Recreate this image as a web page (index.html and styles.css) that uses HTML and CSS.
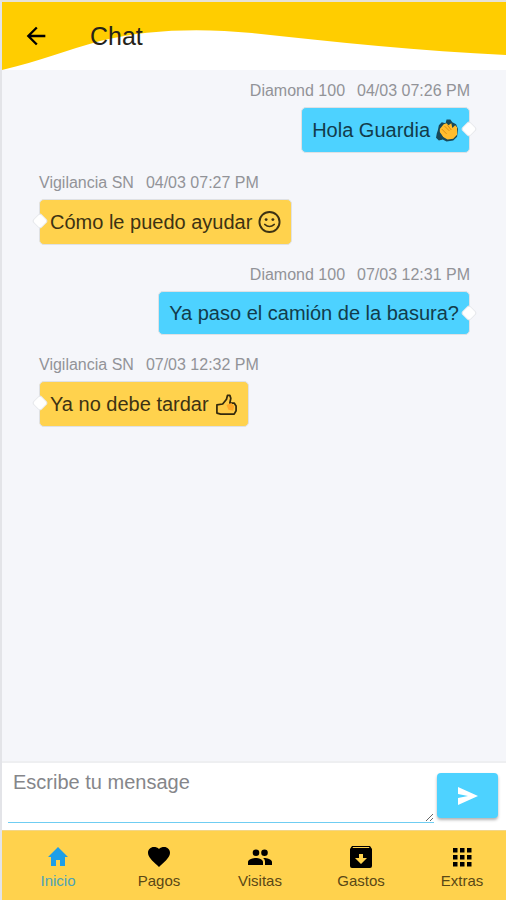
FILE: index.html
```html
<!DOCTYPE html>
<html lang="es">
<head>
<meta charset="utf-8">
<meta name="viewport" content="width=device-width, initial-scale=1">
<title>Chat</title>
<link rel="stylesheet" href="styles.css">
</head>
<body>
<div class="app">
  <header class="header">
    <svg class="wave" viewBox="0 0 504 68" preserveAspectRatio="none" aria-hidden="true">
      <path d="M0 0H504V53C420 49 330 40 250 31C200 26 145 27 98 39C65 48 38 59 0 68Z" fill="#ffcd00"/>
    </svg>
    <button class="back" type="button" aria-label="Volver">
      <svg viewBox="0 0 24 24" width="28" height="28"><path d="M20 11H7.8l5.6-5.6L12 4l-8 8 8 8 1.400-1.400L7.800 13H20z"/></svg>
    </button>
    <h1 class="title">Chat</h1>
  </header>

  <main class="messages">
    <article class="message sent">
      <div class="meta"><span>Diamond 100</span><time>04/03 07:26 PM</time></div>
      <div class="bubble">Hola Guardia
        <svg class="emoji" viewBox="0 0 24 24" role="img" aria-label="aplausos">
          <path d="M3 7l3-3 4 1 1-4 4 0 2 3 4 2 2 5-1 8-4 4-7 1-4-2-4 1-3-3 1-5 1-3z" fill="#17495a"/>
          <path d="M4 11L8 6l3-1 2 2 3-2 1 5 3-3 2 2 0 8-4 4-6 1-5-3-3-5z" fill="#ffbd2e"/>
          <path d="M6 11l5 5M9 8l5 5M12 7l4 5" fill="none" stroke="#d68a13" stroke-width="1"/>
          <path d="M1 15l4 1 3 4-2 2-4-1-1-3z" fill="#17495a"/>
        </svg>
      </div>
    </article>
    <article class="message received">
      <div class="meta"><span>Vigilancia SN</span><time>04/03 07:27 PM</time></div>
      <div class="bubble">Cómo le puedo ayudar
        <svg class="emoji" viewBox="0 0 24 24" role="img" aria-label="sonrisa">
          <circle cx="12" cy="12" r="10.500" fill="#ffd34f" stroke="#3d3213" stroke-width="2"/>
          <circle cx="8.500" cy="9.500" r="1.500" fill="#3d3213"/>
          <circle cx="15.500" cy="9.500" r="1.500" fill="#3d3213"/>
          <path d="M7 14.500q5 4.500 10 0" fill="none" stroke="#3d3213" stroke-width="1.600" stroke-linecap="round"/>
        </svg>
      </div>
    </article>
    <article class="message sent">
      <div class="meta"><span>Diamond 100</span><time>07/03 12:31 PM</time></div>
      <div class="bubble">Ya paso el camión de la basura?</div>
    </article>
    <article class="message received">
      <div class="meta"><span>Vigilancia SN</span><time>07/03 12:32 PM</time></div>
      <div class="bubble">Ya no debe tardar
        <svg class="emoji" viewBox="0 0 24 24" role="img" aria-label="pulgar arriba">
          <path d="M2 13l6-1 4-5 1-4h2.500l1 3-1 5H20l2 3v5l-2 3.500H6l-4-1z" fill="#ffcb45" stroke="#33290d" stroke-width="1.800" stroke-linejoin="round"/>
          <path d="M12 13l5-2 3 3-1 5-5-1z" fill="#ffa726"/>
        </svg>
      </div>
    </article>
  </main>

  <form class="composer">
    <textarea class="field" aria-label="Mensaje" placeholder="Escribe tu mensage"></textarea>
    <button class="send" type="button" aria-label="Enviar">
      <svg viewBox="0 0 20 18" width="20" height="18"><path d="M0 0l20 9L0 18v-7l10-2L0 7z"/></svg>
    </button>
  </form>

  <nav class="tabs">
    <a class="tab active" href="#inicio">
      <svg viewBox="0 0 24 24"><path d="M10 21v-6h4v6h5v-9h3L12 2 2 12h3v9z"/></svg>Inicio</a>
    <a class="tab" href="#pagos">
      <svg viewBox="0 0 24 24"><path d="M12 22l-1.500-1.400C5 15.600 1 12 1 7.800 1 4.500 3.600 2 6.800 2c2 0 4 .5 5.200 2C13.200 2.500 15.200 2 17.200 2 20.400 2 23 4.500 23 7.800c0 4.200-4 7.800-9.500 12.800z"/></svg>Pagos</a>
    <a class="tab" href="#visitas">
      <svg viewBox="0 0 24 24"><path d="M16.500 11a3.300 3.300 0 1 0 0-6.600 3.300 3.300 0 0 0 0 6.600zm-8.500 0a3.300 3.300 0 1 0 0-6.600 3.300 3.300 0 0 0 0 6.600zm0 2c-2.700 0-8 1.300-8 4v3h15v-3c0-2.700-4.700-4-7-4zm8 0h-1c1.500 1 2 2.300 2 4v3h7v-3c0-2.700-5.300-4-8-4z"/></svg>Visitas</a>
    <a class="tab" href="#gastos">
      <svg viewBox="0 0 24 24"><path fill-rule="evenodd" d="M3 1h18l2 3v17a2 2 0 0 1-2 2H3a2 2 0 0 1-2-2V4zM4 2L3.500 3h17L20 2zM10 9v4H6l6 6 6-6h-4V9z"/></svg>Gastos</a>
    <a class="tab" href="#extras">
      <svg viewBox="0 0 24 24"><path d="M3 3h4.500v4.500H3zm7 0h4.500v4.500H10zm7 0h4.500v4.500H17zM3 10h4.500v4.500H3zm7 0h4.500v4.500H10zm7 0h4.500v4.500H17zM3 17h4.500v4.500H3zm7 0h4.500v4.500H10zm7 0h4.500v4.500H17z"/></svg>Extras</a>
  </nav>
</div>
</body>
</html>
```
FILE: styles.css
```css
* {
  box-sizing: border-box;
}

body {
  margin: 0;
  font-family: "Liberation Sans", Arial, sans-serif;
}

.app {
  display: flex;
  flex-direction: column;
  min-height: 100vh;
  border-top: 2px solid #e6e2d6;
  border-left: 2px solid #e3e4e8;
  background: #f5f6fa;
}

.header {
  position: relative;
  display: flex;
  align-items: center;
  gap: 40px;
  height: 68px;
  padding-left: 20px;
  background: #fff;
}

.wave {
  position: absolute;
  inset: 0;
  width: 100%;
  height: 100%;
}

.back {
  position: relative;
  display: flex;
  padding: 0;
  border: 0;
  background: none;
}

.title {
  position: relative;
  margin: 0;
  font-size: 25px;
  font-weight: 400;
  color: #262318;
}

.messages {
  flex: 1;
  display: flex;
  flex-direction: column;
  gap: 18px;
  padding: 9px 36px 18px 37px;
}

.message {
  display: flex;
  flex-direction: column;
  gap: 4px;
}

.sent {
  align-items: flex-end;
}

.received {
  align-items: flex-start;
}

.meta {
  display: flex;
  gap: 12px;
  font-size: 16px;
  line-height: 24px;
  color: #929398;
}

.bubble {
  position: relative;
  display: flex;
  align-items: center;
  gap: 6px;
  padding: 10px;
  border: 1px solid #dfe1e4;
  border-radius: 5px;
  font-size: 20px;
  line-height: 22px;
}

.sent .bubble {
  background: #4dd2ff;
  color: #123c4b;
}

.received .bubble {
  background: #ffd24d;
  color: #3d3213;
}

.bubble::after {
  content: "";
  position: absolute;
  top: 15px;
  width: 10px;
  height: 10px;
  border: 1px solid #e6e8ec;
  border-radius: 3px;
  background: #fff;
  transform: rotate(45deg);
}

.sent .bubble::after {
  right: -6px;
}

.received .bubble::after {
  left: -6px;
}

.emoji {
  width: 23px;
  height: 24px;
}

.composer {
  display: flex;
  align-items: flex-start;
  gap: 3px;
  padding: 7px 8px 7px 6px;
  border-top: 2px solid #eeeff1;
  background: #fff;
}

.field {
  flex: 1;
  min-width: 0;
  height: 53px;
  padding: 0 5px;
  border: 0;
  border-bottom: 1px solid #6fcdf2;
  outline: 0;
  background: transparent;
  font: 20px/24px "Liberation Sans", Arial, sans-serif;
  color: #333;
}

.field::placeholder {
  color: #85868a;
}

.send {
  display: flex;
  align-items: center;
  justify-content: center;
  width: 61px;
  height: 45px;
  margin-top: 3px;
  border: 0;
  border-radius: 4px;
  background: #4dd2ff;
  box-shadow: 0 2px 3px #0000004d;
  fill: #fff;
}

.tabs {
  display: flex;
  justify-content: space-between;
  height: 70px;
  padding: 14px 0 0 12px;
  border-top: 1px solid #f3d687;
  background: #ffd24d;
}

.tab {
  display: flex;
  flex-direction: column;
  align-items: center;
  gap: 3px;
  width: 88px;
  font-size: 15px;
  line-height: 18px;
  color: #5a4816;
  text-decoration: none;
}

.tab svg {
  width: 24px;
  height: 24px;
  fill: #000;
}

.tab.active {
  color: #4da3b5;
}

.tab.active svg {
  fill: #1e9fe8;
}
```
